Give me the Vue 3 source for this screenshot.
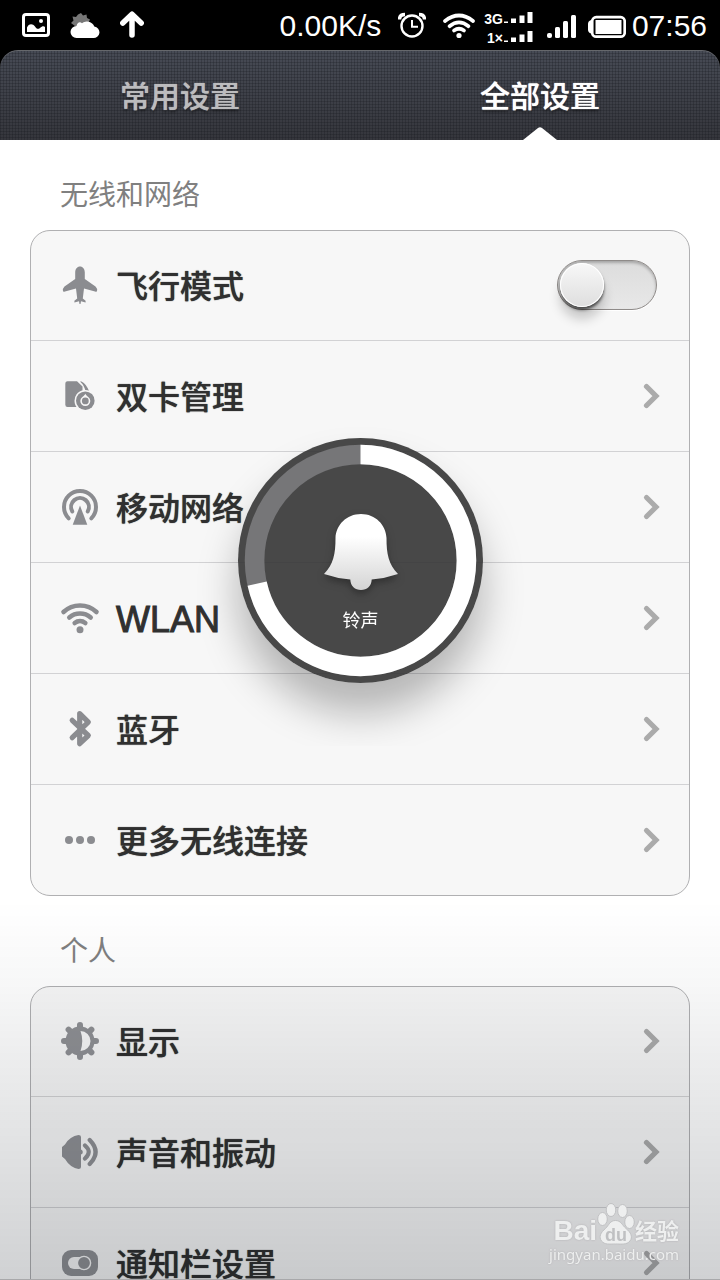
<script setup>
import { ref } from 'vue'

const tabs = ['常用设置', '全部设置']
const activeTab = ref(1)
const airplane = ref(false)
const volume = 71.5

const groups = [
  {
    title: '无线和网络',
    items: [
      { icon: 'plane', label: '飞行模式', toggle: true },
      { icon: 'sim', label: '双卡管理' },
      { icon: 'antenna', label: '移动网络' },
      { icon: 'wifi', label: 'WLAN', latin: true },
      { icon: 'bluetooth', label: '蓝牙' },
      { icon: 'more', label: '更多无线连接' }
    ]
  },
  {
    title: '个人',
    items: [
      { icon: 'display', label: '显示' },
      { icon: 'sound', label: '声音和振动' },
      { icon: 'notify', label: '通知栏设置' }
    ]
  }
]
</script>

<template>
  <div class="screen">
    <header class="status">
      <div class="status-left">
        <svg width="28" height="28" viewBox="0 0 28 28">
          <rect x="1.5" y="3.5" width="25" height="21" rx="2.5" fill="none" stroke="#fff" stroke-width="3" />
          <circle cx="19" cy="10" r="2" fill="#fff" />
          <path d="M5 21V16.500C6.500 12.500 10.500 12 13 15.500C14.500 18 16 18.500 18 17C20 15 22 15 23 16V21Z" fill="#fff" />
        </svg>
        <svg width="30" height="28" viewBox="0 0 30 28">
          <path d="M11 2L13 4.500L16.500 3.500L17 7L20 8.500L18.500 11.500L19 15H5L1 12L3.500 9.500L2.500 5.500L6 6L8 3.500Z" fill="#777" />
          <path d="M6.500 27A5.700 5.700 0 0 1 6.500 15C7.500 11 10 10.500 12 12.300A8 8 0 0 1 24.300 15.500A5.700 5.700 0 0 1 23 27Z" fill="#fff" />
        </svg>
        <svg width="24" height="28" viewBox="0 0 24 28">
          <path d="M12 24V4M2.800 12L12 3.200L21.200 12" fill="none" stroke="#fff" stroke-width="5.500" stroke-linecap="round" stroke-linejoin="round" />
        </svg>
      </div>
      <div class="status-right">
        <span class="status-text">0.00K/s</span>
        <svg class="alarm" width="28" height="28" viewBox="0 0 28 28">
          <circle cx="14" cy="15" r="10.500" fill="none" stroke="#fff" stroke-width="2.400" />
          <path d="M14 9V15.800H20" fill="none" stroke="#fff" stroke-width="2" />
          <path d="M1.500 8.500Q1.500 3.500 7 3.500M26.500 8.500Q26.500 3.500 21 3.500" fill="none" stroke="#fff" stroke-width="3.500" />
        </svg>
        <svg class="swifi" width="34" height="28" viewBox="0 0 34 28">
          <g fill="none" stroke="#fff" stroke-width="3.700" stroke-linecap="round">
            <path d="M3 10Q17 -1 31 10" />
            <path d="M7.500 15.200Q17 7.500 26.500 15.200" />
            <path d="M12 19.500Q17 16 22 19.500" />
          </g>
          <circle cx="17" cy="24.500" r="2.600" fill="#fff" />
        </svg>
        <div class="nets">
          <div v-for="name in ['3G', '1×']" :key="name" class="net">
            <span>{{ name }}</span>
            <svg width="30" height="11" viewBox="0 0 30 11">
              <path d="M1 9.500h4v1.500h-4zM8 6.500h5v4.500h-5zM16.500 3.500h5v7.500h-5zM24.500 0h5v11h-5z" fill="#fff" />
            </svg>
          </div>
        </div>
        <svg class="signal" width="30" height="28" viewBox="0 0 30 28">
          <g fill="#fff">
            <rect x="1" y="22" width="5" height="5" rx="2" />
            <rect x="9" y="16" width="5" height="11" rx="1.500" />
            <rect x="17" y="10" width="5" height="17" rx="1.500" />
            <rect x="25" y="4" width="5" height="23" rx="1.500" />
          </g>
        </svg>
        <svg class="battery" width="38" height="28" viewBox="0 0 38 28">
          <path d="M3 9Q0 10 0 13V18.500Q0 21.500 3 22.500Z" fill="#fff" />
          <rect x="4.200" y="6.200" width="32.500" height="19.500" rx="4" fill="none" stroke="#fff" stroke-width="2.700" />
          <rect x="7.500" y="9" width="26" height="14" fill="#fff" />
        </svg>
        <time class="status-text">07:56</time>
      </div>
    </header>

    <nav class="tabs">
      <button
        v-for="(tab, i) in tabs"
        :key="tab"
        type="button"
        class="tab"
        :class="{ active: i === activeTab }"
        @click="activeTab = i"
      >
        {{ tab }}
        <svg v-if="i === activeTab" class="pointer" width="34" height="13" viewBox="0 0 34 13">
          <path d="M0 13L15 1Q17 -.5 19 1L34 13Z" fill="#fff" />
        </svg>
      </button>
    </nav>

    <main class="content">
      <section v-for="group in groups" :key="group.title">
        <h2>{{ group.title }}</h2>
        <ul class="card">
          <li v-for="item in group.items" :key="item.label">
            <component
              :is="item.toggle ? 'label' : 'a'"
              class="row"
              :href="item.toggle ? undefined : '#' + item.icon"
              :for="item.toggle ? item.icon : undefined"
            >
              <svg class="icon" width="40" height="40" viewBox="0 0 40 40">
                <g v-if="item.icon === 'plane'" fill="#8b8c90">
                  <path d="M20 1.500C22.800 1.500 24.800 4 24.800 7.500V14L35.500 21.500Q37.500 23.200 37 26.300Q36.500 27 35 26.400L24 23.500L22.800 33.500L25.600 35.800V37.500L21 36.300L20.500 39H19.500L19 36.300L14.400 37.500V35.800L17.200 33.500L16 23.500L5 26.400Q3.500 27 3 26.300Q2.500 23.200 4.500 21.500L15.200 14V7.500C15.200 4 17.200 1.500 20 1.500Z" />
                </g>
                <g v-else-if="item.icon === 'sim'">
                  <path d="M7.500 5.300H17L22.500 10.500V15L17 31H7.500Q5.300 31 5.300 28.500V8Q5.300 5.300 7.500 5.300Z" fill="#8b8c90" />
                  <path d="M20 5.500H21.500Q26.500 8 29.200 15.500L25.500 15.500Q24.500 9.500 20 5.500Z" fill="#8b8c90" />
                  <circle cx="25.300" cy="24.700" r="10.800" fill="#f7f7f7" />
                  <circle cx="25.300" cy="24.700" r="9.300" fill="#8b8c90" />
                  <path d="M25.300 17.800Q26.500 20 28.500 21.200A5 5 0 1 1 22.100 21.200Q24.200 20 25.300 17.800Z" fill="#f7f7f7" />
                  <circle cx="25.300" cy="24.900" r="3.400" fill="#8b8c90" />
                </g>
                <g v-else-if="item.icon === 'antenna'" fill="none" stroke="#8b8c90" stroke-width="4" stroke-linecap="round">
                  <path d="M8.700 31.300A16 16 0 1 1 31.300 31.300" />
                  <path d="M12.300 24.400A8.900 8.900 0 1 1 27.700 24.400" />
                  <path d="M20 18.500L27.300 37.700H12.700Z" fill="#8b8c90" stroke="none" />
                </g>
                <g v-else-if="item.icon === 'wifi'" fill="none" stroke="#8b8c90" stroke-width="4.600" stroke-linecap="round">
                  <path d="M3.500 14A24 24 0 0 1 36.500 14" />
                  <path d="M9.300 19.500A16.500 16.500 0 0 1 30.700 19.500" />
                  <path d="M14.700 25A8.500 8.500 0 0 1 25.300 25" />
                  <circle cx="20" cy="31.700" r="3.500" fill="#8b8c90" stroke="none" />
                </g>
                <path v-else-if="item.icon === 'bluetooth'" d="M12.200 11.300L28.300 26.500L19.700 34.700V4.500L28.300 13.200L12.200 28.700" fill="none" stroke="#8b8c90" stroke-width="5.200" stroke-linecap="round" stroke-linejoin="round" />
                <g v-else-if="item.icon === 'more'" fill="#8b8c90">
                  <circle cx="9" cy="20" r="4" /><circle cx="20" cy="20" r="4" /><circle cx="31" cy="20" r="4" />
                </g>
                <g v-else-if="item.icon === 'display'">
                  <g fill="none" stroke="#8f9094" stroke-width="6" stroke-linecap="round">
                    <path d="M20 4V36M4 20H36M8.600 8.600L31.400 31.400M31.400 8.600L8.600 31.400" />
                  </g>
                  <circle cx="20" cy="20" r="14.500" fill="#8f9094" />
                  <path d="M20.500 10A10 10 0 0 1 20.500 30Q24 20 20.500 10Z" fill="#f7f7f7" />
                </g>
                <g v-else-if="item.icon === 'sound'" fill="none" stroke="#8f9094" stroke-width="4.200" stroke-linecap="round">
                  <path d="M5 12.500Q10 4 18.500 3Q21 3 21 5V17.500Q22.800 18 22.800 20Q22.800 22 21 22.500V35Q21 37 18.500 37Q10 35.500 5 27L2 24.500V15Z" fill="#8f9094" stroke="none" />
                  <path d="M25 13.500Q32.500 20 25 26.500" />
                  <path d="M29.700 8Q41.500 20 29.700 32" />
                </g>
                <g v-else>
                  <rect x="2" y="7" width="36" height="26" rx="9" fill="#8f9094" />
                  <rect x="8" y="14" width="22" height="12" rx="6" fill="#f7f7f7" />
                  <circle cx="24" cy="20" r="6.600" fill="#8f9094" stroke="#f7f7f7" stroke-width="1.400" />
                </g>
              </svg>
              <span class="label" :class="{ latin: item.latin }">{{ item.label }}</span>
              <input v-if="item.toggle" :id="item.icon" v-model="airplane" class="switch" type="checkbox" />
              <svg v-else class="chevron" width="24" height="28" viewBox="0 0 24 28">
                <path d="M9.500 4.500L19 14L9.500 23.500" fill="none" stroke="#ababab" stroke-width="5.200" stroke-linecap="round" />
              </svg>
            </component>
          </li>
        </ul>
      </section>
    </main>

    <div class="shade"></div>

    <div class="toast" role="status">
      <svg class="ring" viewBox="0 0 244 244">
        <circle cx="122" cy="122" r="105.500" fill="none" stroke="#767678" stroke-width="19.500" />
        <circle
          cx="122" cy="122" r="105.500" fill="none" stroke="#fff" stroke-width="19.500"
          pathLength="100" :stroke-dasharray="volume + ' 100'" transform="rotate(-90 122 122)"
        />
      </svg>
      <svg class="bell" width="76" height="78" viewBox="0 0 76 78">
        <defs>
          <linearGradient id="bellFill" x1="0" y1="0" x2="0" y2="1">
            <stop offset="0.3" stop-color="#fff" />
            <stop offset="1" stop-color="#d4d4d4" />
          </linearGradient>
        </defs>
        <path d="M38 1C52.500 1 63 12 63.500 25C63.500 41 65.500 51 75 61Q62 65.500 48.700 66.500C48.500 73 44 77 38 77C32 77 27.500 73 27.300 66.500Q14 65.500 1 61C10.500 51 12.500 41 12.500 25C13 12 23.500 1 38 1Z" fill="url(#bellFill)" />
      </svg>
      <span class="toast-label">铃声</span>
    </div>

    <div class="watermark">
      <div class="brand">
        <span class="brand-bai">Bai</span>
        <span class="paw">
          <svg width="38" height="42" viewBox="0 0 38 42">
            <g fill="#eeefef" stroke="#bfc0c2" stroke-width="1">
              <ellipse cx="5.500" cy="16" rx="4.800" ry="6.500" />
              <ellipse cx="14" cy="7" rx="4.800" ry="6.500" />
              <ellipse cx="25.500" cy="8" rx="4.800" ry="6.500" />
              <ellipse cx="32.500" cy="19" rx="4.800" ry="6.500" />
              <path d="M18.500 17.500C24 17.500 25 22 29 25.500C34 29.500 36 34 33 38C29.500 42 25 41 18.500 41C12 41 8 42 4.500 38C1.500 34 3.500 29.500 8.500 25.500C12 22 13 17.500 18.500 17.500Z" />
            </g>
          </svg>
          <span class="brand-du">du</span>
        </span>
        <span class="brand-cn">经验</span>
      </div>
      <div class="url">jingyan.baidu.com</div>
    </div>
  </div>
</template>

<style>
html,
body {
  background: #000;
}
</style>

<style scoped>
.screen {
  position: relative;
  display: flex;
  flex-direction: column;
  height: 100vh;
  overflow: hidden;
  background: #000;
  font-family: "Liberation Sans", "Noto Sans CJK SC", sans-serif;
}
svg {
  display: block;
  flex: none;
}
.status {
  display: flex;
  justify-content: space-between;
  align-items: center;
  flex: none;
  height: 50px;
  padding: 0 13px 0 22px;
  box-sizing: border-box;
  color: #fff;
}
.status-left {
  display: flex;
  gap: 20px;
}
.status-right {
  display: flex;
  align-items: center;
}
.status-text {
  font-size: 30px;
  line-height: 50px;
  padding-top: 2px;
}
.alarm {
  margin-left: 17px;
}
.swifi {
  margin: 0 8px 0 16px;
}
.net {
  display: flex;
  align-items: flex-end;
  justify-content: flex-end;
  height: 19px;
  font-size: 14px;
  font-weight: 700;
  line-height: 12px;
}
.net svg {
  margin-bottom: 2px;
}
.signal {
  margin: 0 12px 0 13px;
}
.battery {
  margin-right: 6px;
}
.tabs {
  display: flex;
  flex: none;
  height: 90px;
  box-sizing: border-box;
  border-radius: 18px 18px 0 0;
  box-shadow: inset 0 1px #66686c;
  background:
    repeating-linear-gradient(90deg, rgba(20, 22, 28, 0.25) 0 1px, transparent 1px 3px),
    repeating-linear-gradient(rgba(20, 22, 28, 0.25) 0 1px, transparent 1px 3px),
    linear-gradient(#474b55, #35363c);
}
.tab {
  position: relative;
  flex: 1;
  padding: 0 0 2px;
  border: 0;
  background: none;
  color: #bcbcbe;
  font-family: inherit;
  font-size: 30px;
  font-weight: 500;
  text-shadow: 0 0 1px currentColor, 0 2px 3px rgba(0, 0, 0, 0.5);
}
.tab.active {
  color: #fff;
}
.pointer {
  position: absolute;
  bottom: 0;
  left: 50%;
  margin-left: -17px;
}
.content {
  flex: 1;
  min-height: 0;
  padding: 0 30px;
  overflow-y: auto;
  scrollbar-width: none;
  background: #fff;
}
h2 {
  height: 90px;
  margin: 0;
  padding: 20px 0 0 30px;
  box-sizing: border-box;
  color: #808080;
  font-size: 28px;
  font-weight: 400;
  line-height: 72px;
}
.card {
  margin: 0;
  padding: 0;
  list-style: none;
  border: 1px solid #b0b0b2;
  border-radius: 20px;
  background: #f7f7f7;
}
.card li + li {
  border-top: 1px solid #d2d2d4;
}
.row {
  display: flex;
  align-items: center;
  gap: 16px;
  height: 110px;
  padding: 0 28px 0 29px;
  box-sizing: border-box;
  color: #303030;
  text-decoration: none;
}
.card li:first-child .row {
  height: 109px;
  padding-bottom: 1px;
}
.label {
  flex: 1;
  padding-top: 4px;
  font-size: 32px;
  font-weight: 500;
  line-height: 48px;
  text-shadow: 0 0 1px #303030;
}
.latin {
  font-size: 36px;
  font-kerning: none;
  -webkit-text-stroke: 1px #303030;
  text-shadow: none;
}
.switch {
  appearance: none;
  width: 100px;
  height: 50px;
  margin: 0 4px 0 0;
  padding: 2px;
  box-sizing: border-box;
  border: 1px solid #8f8b89;
  border-radius: 25px;
  background: linear-gradient(#dcdcdc, #e8e8e8);
  box-shadow: inset 0 2px 3px rgba(0, 0, 0, 0.25), 0 1px #fff;
}
.switch::before {
  content: "";
  display: block;
  width: 44px;
  height: 44px;
  border-radius: 50%;
  background: linear-gradient(#f8f8f8, #dedede);
  box-shadow: inset 0 0 0 1px #fff, 0 3px 3px rgba(0, 0, 0, 0.6), 0 12px 12px rgba(0, 0, 0, 0.2);
}
.switch:checked::before {
  margin-left: auto;
}
.shade {
  position: absolute;
  right: 0;
  bottom: 0;
  left: 0;
  height: 380px;
  box-sizing: border-box;
  border-bottom: 1px solid #a8a8aa;
  background: linear-gradient(rgba(0, 8, 18, 0), rgba(0, 8, 18, 0.03) 22%, rgba(0, 8, 18, 0.095) 53%, rgba(0, 8, 18, 0.185));
  pointer-events: none;
}
.toast {
  position: absolute;
  top: 438px;
  left: 50%;
  display: flex;
  flex-direction: column;
  align-items: center;
  width: 245px;
  height: 245px;
  margin-left: -122px;
  padding-top: 75px;
  box-sizing: border-box;
  border-radius: 50%;
  background: rgba(50, 50, 51, 0.89);
  box-shadow: 0 30px 40px rgba(0, 0, 0, 0.27);
  clip-path: inset(-60px -60px -63px);
  color: #fff;
}
.ring {
  position: absolute;
  inset: 0;
}
.bell {
  filter: drop-shadow(0 4px 4px rgba(0, 0, 0, 0.35));
}
.toast-label {
  padding-top: 16px;
  font-size: 18px;
  line-height: 28px;
}
.watermark {
  position: absolute;
  right: 41px;
  bottom: 17px;
  color: #eeefef;
  text-shadow: 0 0 2px #a8a9ab;
}
.brand {
  display: flex;
  align-items: flex-end;
  justify-content: flex-end;
  height: 42px;
}
.brand-bai {
  font-size: 28px;
  font-weight: 700;
  line-height: 28px;
}
.paw {
  position: relative;
}
.brand-du {
  position: absolute;
  right: 0;
  bottom: 0;
  left: 0;
  color: #bfc0c2;
  font-size: 18px;
  font-weight: 700;
  line-height: 20px;
  text-align: center;
  text-shadow: none;
}
.brand-cn {
  font-size: 22px;
  font-weight: 700;
  line-height: 26px;
}
.url {
  font-family: "Noto Sans", sans-serif;
  font-size: 15px;
  line-height: 18px;
}
</style>
